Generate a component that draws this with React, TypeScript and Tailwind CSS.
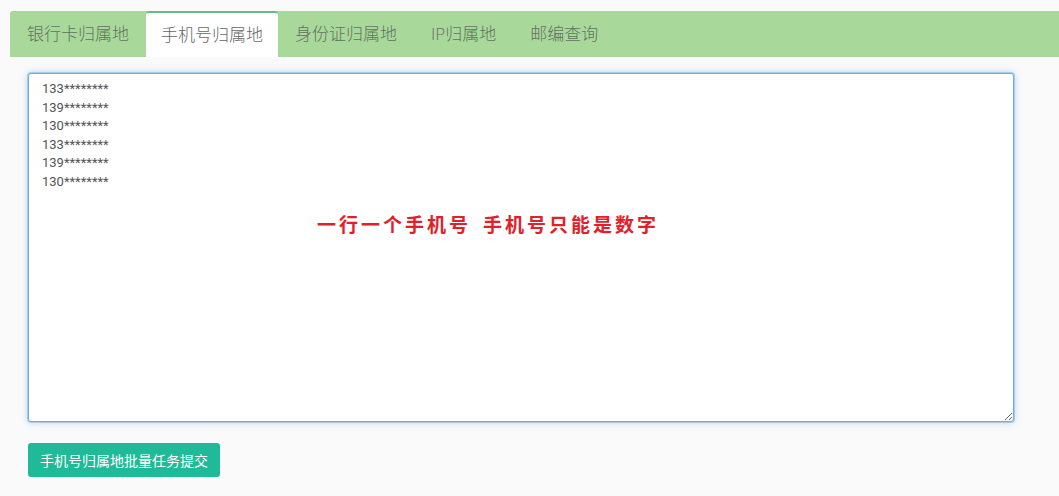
import { useState } from 'react'

const tabs = ['银行卡归属地', '手机号归属地', '身份证归属地', 'IP归属地', '邮编查询']

const sample = [
  '133********',
  '139********',
  '130********',
  '133********',
  '139********',
  '130********',
].join('\n')

export default function App() {
  const [active, setActive] = useState(1)
  const [value, setValue] = useState(sample)

  return (
    <div
      className="h-[496px] overflow-hidden bg-[#fafafa] pt-[11px]"
      style={{ fontFamily: '"Open Sans", "Noto Sans CJK SC", sans-serif' }}
    >
      {/* Tabs */}
      <div className="ml-[10px] flex h-[46px] rounded-tl-[3px] bg-[#a8d99a]">
        {tabs.map((t, i) => (
          <button
            key={t}
            onClick={() => setActive(i)}
            className={
              i === active
                ? 'h-[46px] rounded-t-[3px] border-t-2 border-[#68bb86] bg-white px-[15px] text-[17px] font-light text-[#666]'
                : 'h-[46px] px-[17px] text-[17px] font-light text-[#666f63]'
            }
          >
            {t}
          </button>
        ))}
      </div>

      {/* Textarea */}
      <div className="pl-[28px] pr-[45px] pt-[16px]">
        <div className="relative">
          <textarea
            value={value}
            onChange={(e) => setValue(e.target.value)}
            className="block h-[349px] w-full resize-y rounded-[3px] border border-[#74acd8] bg-white px-[13px] pt-[6px] font-['Roboto',sans-serif] text-[13px] leading-[18.6px] text-[#555] shadow-[0_0_0_1px_rgba(116,172,216,0.45),0_0_7px_rgba(102,175,233,0.6)] outline-none"
          />
          <div className="pointer-events-none absolute left-[289px] top-[138px] flex text-[19px] font-bold tracking-[3px] text-[#e2202a]">
            <span>一行一个手机号</span>
            <span className="ml-[12px]">手机号只能是数字</span>
          </div>
        </div>

        <button className="mt-[21px] h-[34px] rounded-[3px] bg-[#1fba98] px-3 text-[14px] text-white">
          手机号归属地批量任务提交
        </button>
      </div>
    </div>
  )
}
